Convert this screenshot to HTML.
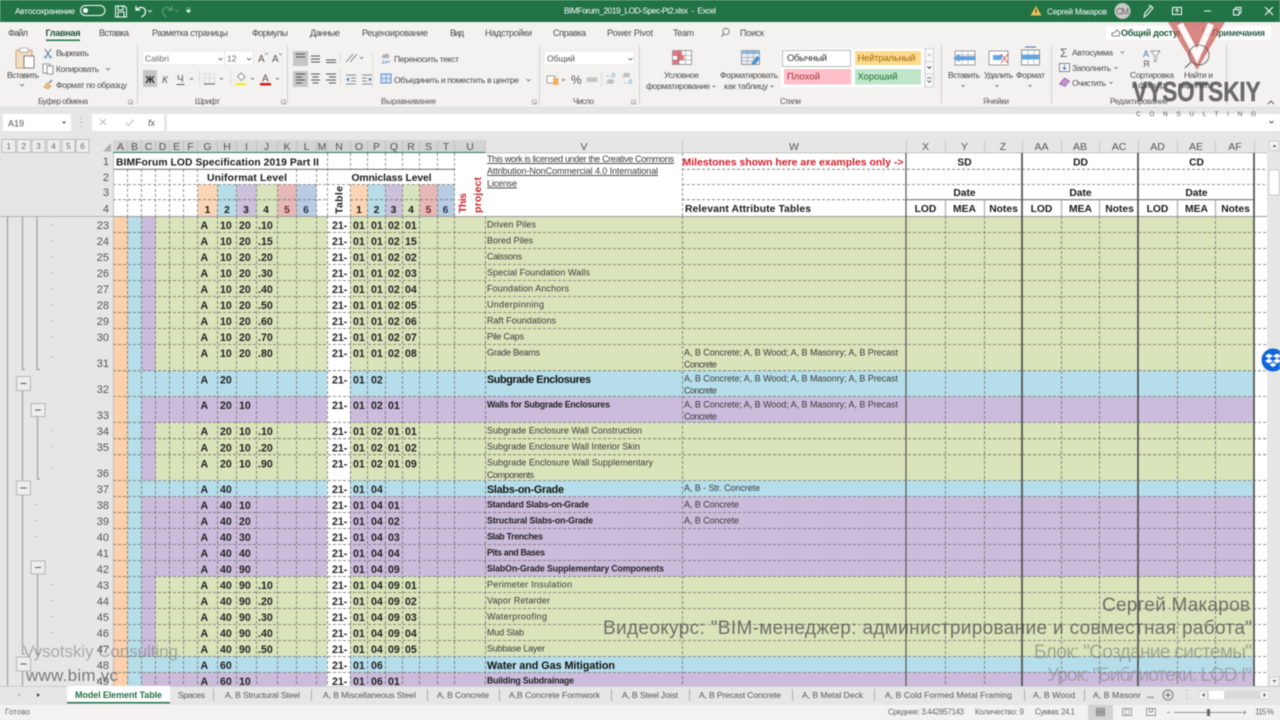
<!DOCTYPE html>
<html lang="ru"><head><meta charset="utf-8"><title>BIMForum_2019_LOD-Spec-Pt2.xlsx - Excel</title>
<style>
html,body{margin:0;padding:0;width:1280px;height:720px;overflow:hidden;background:#e6e6e6}
svg{display:block;position:absolute;left:0;top:0;filter:blur(.4px)}
text{font-family:"Liberation Sans",sans-serif;white-space:pre}
.r{font-size:8.5px;fill:#4a4a4a}
.rb{font-size:9px;fill:#4a4a4a}
.w{font-size:8.300px;fill:#fff}
.l{font-size:8.200px;fill:#555}
.tab{font-size:8.600px;fill:#555}
.d{font-size:10.600px;font-weight:700;fill:#222}
.n{font-size:11px;fill:#555;text-anchor:end}
.c{font-size:10.500px;fill:#555;text-anchor:middle}
.v{font-size:9px;fill:#3a3a3a}
.vb{font-size:8.800px;font-weight:700;fill:#222}
.vB{font-size:10.800px;font-weight:700;fill:#111}
.h{font-size:10.300px;font-weight:700;fill:#1a1a1a}
.hm{font-size:10.300px;font-weight:700;fill:#1a1a1a;text-anchor:middle}
.st{font-size:8px;fill:#666}
</style></head><body>
<svg width="1280" height="720" viewBox="0 0 1280 720" xmlns="http://www.w3.org/2000/svg">
<!-- base -->
<rect width="1280" height="720" fill="#e6e6e6"/>
<rect width="1280" height="22" fill="#217346"/>
<rect y="22" width="1280" height="85" fill="#f3f2f1"/>
<rect y="107" width="1280" height="33" fill="#e6e6e6"/>

<!-- title bar -->
<text class="w" x="15" y="14" textLength="60">Автосохранение</text>
<rect x="80.500" y="5.500" width="24.500" height="10" rx="5" fill="none" stroke="#fff"/>
<circle cx="85.500" cy="10.500" r="2.500" fill="#fff"/>
<path d="M115.500 6h9l2 2v9h-11zM118 6v4h5V6M118 17v-5h6v5" fill="none" stroke="#fff" stroke-width="1"/>
<path d="M136 6v4h4M136.500 10c3-4 9-3 9 1.500 0 2.500-2 4.500-4 5.500" fill="none" stroke="#fff" stroke-width="1.200"/>
<path d="M148 10l2 2 2-2" fill="none" stroke="#fff" stroke-width=".8"/>
<path d="M172 6v4h-4M171.500 10c-3-4-9-3-9 1.500 0 2.500 2 4.500 4 5.500" fill="none" stroke="#5f9a7c" stroke-width="1.200"/>
<path d="M175 10l2 2 2-2" fill="none" stroke="#5f9a7c" stroke-width=".8"/>
<path d="M186.500 8h4M186 10h5l-2.500 3z" fill="#dfe" stroke="#dfe" stroke-width=".5"/>
<text class="w" x="564" y="13.500" textLength="152">BIMForum_2019_LOD-Spec-Pt2.xlsx  -  Excel</text>
<path d="M1036 6l5.500 9.500h-11z" fill="#f0c050"/><rect x="1035.500" y="9" width="1" height="4" fill="#333"/>
<text class="w" x="1047" y="14.500" textLength="60">Сергей Макаров</text>
<circle cx="1122.500" cy="11" r="8" fill="#c9c9c9"/>
<text x="1116" y="14.500" font-size="9" fill="#666" textLength="13">СМ</text>
<path d="M1144 17l1-4 6-7 2 2-6 7zM1149 5l3 2" fill="none" stroke="#fff"/>
<rect x="1172.500" y="7.500" width="9" height="7" fill="none" stroke="#fff"/><path d="M1177 13V9.500M1175 11l2-2 2 2" fill="none" stroke="#fff" stroke-width=".8"/>
<rect x="1204" y="10.500" width="7" height="1" fill="#dfe"/>
<path d="M1233.500 9.500h5.500v5.500h-5.500zM1235.500 9.500v-2h5.500v5.500h-2" fill="none" stroke="#fff" stroke-width=".9"/>
<path d="M1265 7l8 8M1273 7l-8 8" stroke="#fff" stroke-width="1"/>

<!-- tabs row -->
<g class="rb">
<text class="rb" x="8" y="36" textLength="20">Файл</text>
<text class="rb" x="45.500" y="36" font-weight="700" style="fill:#1f4f38" textLength="35">Главная</text>
<text class="rb" x="99" y="36" textLength="30">Вставка</text>
<text class="rb" x="152" y="36" textLength="76">Разметка страницы</text>
<text class="rb" x="252" y="36" textLength="36">Формулы</text>
<text class="rb" x="310" y="36" textLength="30">Данные</text>
<text class="rb" x="362" y="36" textLength="66">Рецензирование</text>
<text class="rb" x="450" y="36" textLength="14">Вид</text>
<text class="rb" x="485" y="36" textLength="47">Надстройки</text>
<text class="rb" x="553" y="36" textLength="33">Справка</text>
<text class="rb" x="607" y="36" textLength="46">Power Pivot</text>
<text class="rb" x="673" y="36" textLength="21">Team</text>
<text class="rb" x="740" y="36" textLength="24">Поиск</text>
</g>
<rect x="46" y="39.500" width="34" height="1.500" fill="#217346"/>
<circle cx="726" cy="31.500" r="3.200" fill="none" stroke="#666" stroke-width=".8"/><path d="M724 34l-2.500 2.500" stroke="#666"/>
<rect x="1106" y="26" width="165" height="14" fill="#fff"/>
<path d="M1112 36v-3h2l3-3 3 3-1 3z" fill="none" stroke="#666" stroke-width=".8"/>
<text x="1121" y="36" font-size="9" font-weight="700" fill="#1f5a3c" textLength="62">Общий доступ</text>
<rect x="1203" y="29" width="7" height="6" fill="none" stroke="#777" stroke-width=".8"/>
<text x="1212" y="36" font-size="9" font-weight="700" fill="#35604a" textLength="53">Примечания</text>

<!-- ribbon separators -->
<path d="M137.500 45v59M287.500 45v59M539.500 45v59M639.500 45v59M941.500 45v59M1051.500 45v59M1226.500 45v59" stroke="#d2d0ce"/>
<path d="M340.500 51v12M372.500 51v37M340.500 70v15M199.500 70v16M230.500 70v16M601.500 72v15" stroke="#dcdcdc"/>

<!-- clipboard -->
<rect x="16" y="50" width="16" height="18" rx="1" fill="#f3dcc0" stroke="#c9a37c"/>
<rect x="20" y="48" width="8" height="4" fill="#fff" stroke="#999" stroke-width=".7"/>
<rect x="24" y="56" width="10" height="12" fill="#fff" stroke="#666" stroke-width=".8"/>
<text class="r" x="7" y="78" textLength="32">Вставить</text><path d="M20 84l2 2 2-2" fill="none" stroke="#666" stroke-width=".8"/>
<path d="M45 49l5 8M51 49l-5 8" stroke="#667" stroke-width=".9" fill="none"/><circle cx="45.500" cy="57" r="1.500" fill="#7aa7d8"/><circle cx="50.500" cy="57" r="1.500" fill="#7aa7d8"/>
<text class="r" x="56" y="56" textLength="33">Вырезать</text>
<rect x="43" y="64" width="7" height="9" fill="#fff" stroke="#777" stroke-width=".8"/><rect x="47" y="66" width="6" height="8" fill="#fff" stroke="#777" stroke-width=".8"/>
<text class="r" x="56" y="72" textLength="43">Копировать</text><path d="M106 68l2 2 2-2" fill="none" stroke="#666" stroke-width=".8"/>
<path d="M44 87l3-4 4 3-3 3z" fill="#f0c070" stroke="#b88a40" stroke-width=".6"/><path d="M49 83l3-3" stroke="#888" stroke-width="1.500"/>
<text class="r" x="56" y="88" textLength="71">Формат по образцу</text>
<text class="l" x="38" y="104" textLength="50">Буфер обмена</text>
<path d="M128.500 100h4v4h-4zM130 102l2 2" fill="none" stroke="#888" stroke-width=".6"/>

<!-- font -->
<rect x="142.500" y="51" width="82" height="14" fill="#fff" stroke="#e0e0e0" stroke-width=".6"/>
<rect x="225" y="51" width="28" height="14" fill="#fff" stroke="#e0e0e0" stroke-width=".6"/>
<text class="r" x="145" y="61.500" textLength="24" style="fill:#666">Calibri</text>
<path d="M218.500 58l2 2 2-2M247 58l2 2 2-2" fill="none" stroke="#555" stroke-width=".8"/>
<text class="r" x="227" y="61.500" style="fill:#666">12</text>
<text x="258" y="62" font-size="10" fill="#555">A</text><text x="272" y="62" font-size="10" fill="#555">A</text>
<path d="M265 54.500l1.500-1.500 1.500 1.500" fill="none" stroke="#3a78c0" stroke-width=".6"/><path d="M279 53.500l1.500 1.500 1.500-1.500" fill="none" stroke="#3a78c0" stroke-width=".6"/>
<rect x="143" y="70" width="14" height="17" fill="#c8c6c4"/>
<text x="145.500" y="83" font-size="10" font-weight="700" fill="#222">Ж</text>
<text x="162" y="83" font-size="10" font-style="italic" fill="#555">К</text>
<text x="177" y="82" font-size="10" fill="#555">Ч</text><rect x="176.500" y="84" width="8" height="1" fill="#555"/>
<path d="M190 78l1.500 1.500 1.500-1.500M220 78l1.500 1.500 1.500-1.500M251 78l1.500 1.500 1.500-1.500M276 78l1.500 1.500 1.500-1.500" fill="none" stroke="#666" stroke-width=".8"/>
<path d="M204.500 73.500h10v10h-10zM204.500 78.500h10M209.500 73.500v10" fill="none" stroke="#bbb" stroke-width=".8" stroke-dasharray="1 1"/><path d="M204 84h11" stroke="#666"/>
<path d="M241 73l4 4-3.500 3.500-4-4z" fill="#fff" stroke="#666" stroke-width=".7"/><rect x="235.500" y="83" width="10.500" height="2.500" fill="#f7e739"/>
<text x="262" y="81.500" font-size="10" fill="#555">А</text><rect x="260" y="83" width="11" height="2.500" fill="#d01c1c"/>
<text class="l" x="195" y="104" textLength="25">Шрифт</text>
<path d="M281.500 100h4v4h-4zM283 102l2 2" fill="none" stroke="#888" stroke-width=".6"/>

<!-- alignment -->
<rect x="293" y="51" width="15" height="15" fill="#c8c6c4"/><rect x="293" y="71" width="15" height="16" fill="#c8c6c4"/>
<path d="M296 54h9M296 57h9M311 56h9M311 59h9M311 62h9M326 60h10M326 62.500h10" stroke="#555" stroke-width=".9" fill="none"/>
<path d="M296 74h9M296 77h6M296 80h9M296 83h6M311 74h9M312.500 77h6M311 80h9M312.500 83h6M326 74h10M329 77h7M326 80h10M329 83h7" stroke="#555" stroke-width=".9" fill="none"/>
<path d="M346 62l7-8M350 62l7-8" stroke="#777" stroke-width=".9"/><path d="M360 57l1.500 1.500 1.500-1.500" fill="none" stroke="#666" stroke-width=".8"/>
<path d="M346 75h10M351 78h5M351 81h5M346 84h10M362 75h10M362 78h5M362 81h5M362 84h10" stroke="#666" stroke-width=".8"/>
<path d="M346 79.500l3-2v4zM372 79.500l-3-2v4z" fill="#3a78c0"/>
<text x="382" y="58" font-size="6.500" fill="#555">ab</text><text x="382" y="64" font-size="6.500" fill="#3a78c0">c↵</text>
<text class="r" x="394" y="62" textLength="65">Переносить текст</text>
<rect x="381" y="74" width="10" height="9" fill="#d3e4f4" stroke="#3a78c0" stroke-width=".8"/><path d="M381 78.500h10M386 74v9" stroke="#3a78c0" stroke-width=".5"/>
<text class="r" x="394" y="83" textLength="125">Объединить и поместить в центре</text>
<path d="M526.500 79l2 2 2-2" fill="none" stroke="#666" stroke-width=".8"/>
<text class="l" x="381" y="104" textLength="55">Выравнивание</text>
<path d="M532.500 100h4v4h-4zM534 102l2 2" fill="none" stroke="#888" stroke-width=".6"/>

<!-- number -->
<rect x="544" y="51" width="90" height="14" fill="#fff" stroke="#e0e0e0" stroke-width=".6"/>
<text class="r" x="547" y="61.500" textLength="28">Общий</text>
<path d="M628.500 58l2 2 2-2M562 79l1.500 1.500 1.500-1.500" fill="none" stroke="#555" stroke-width=".8"/>
<rect x="547" y="76" width="8" height="7" fill="#fff" stroke="#777" stroke-width=".7"/><rect x="553" y="78" width="5.500" height="7" fill="#f4b060"/>
<text x="571" y="84" font-size="12" fill="#555">%</text>
<text x="586.500" y="82" font-size="6.500" fill="#666">000</text>
<text x="605" y="77" font-size="5.500" fill="#3a78c0">←,0</text><text x="606" y="83.500" font-size="5.500" fill="#555">,00</text>
<text x="622" y="77" font-size="5.500" fill="#555">,00</text><text x="622" y="83.500" font-size="5.500" fill="#3a78c0">→,0</text>
<text class="l" x="573" y="104" textLength="21">Число</text>
<path d="M631.500 100h4v4h-4zM633 102l2 2" fill="none" stroke="#888" stroke-width=".6"/>

<!-- styles -->
<rect x="672.500" y="50.500" width="19" height="14" fill="#fff" stroke="#777" stroke-width=".7"/>
<rect x="673" y="51" width="9" height="4.500" fill="#e8727c"/><rect x="677" y="55.500" width="7" height="4.500" fill="#e8727c"/><rect x="673" y="60" width="6" height="4" fill="#e8727c"/>
<path d="M672.500 55.500h19M672.500 60h19M679 50.500v14M685.500 50.500v14" stroke="#777" stroke-width=".5"/>
<text class="r" x="664" y="78" textLength="35">Условное</text>
<text class="r" x="646" y="89" textLength="64">форматирование</text><path d="M712.500 85.500l1.500 1.500 1.500-1.500" fill="none" stroke="#666" stroke-width=".8"/>
<rect x="741.500" y="50.500" width="18" height="14" fill="#eaf1f8" stroke="#777" stroke-width=".7"/>
<rect x="741.500" y="50.500" width="18" height="3.500" fill="#8fb6dc"/>
<path d="M741.500 57.500h18M741.500 61h18M747.500 50.500v14M753.500 50.500v14" stroke="#888" stroke-width=".5"/>
<path d="M751 64l6-8 3 2-5 7z" fill="#4a90d0"/>
<text class="r" x="720" y="78" textLength="58">Форматировать</text>
<text class="r" x="724" y="89" textLength="44">как таблицу</text><path d="M770.500 85.500l1.500 1.500 1.500-1.500" fill="none" stroke="#666" stroke-width=".8"/>
<rect x="781" y="49" width="143" height="38" fill="#fff"/>
<rect x="782.500" y="50.500" width="68" height="16" fill="#fff" stroke="#bdbdbd"/>
<rect x="784" y="69" width="67" height="15.500" fill="#ffc0ca"/>
<rect x="855" y="51" width="66" height="14" fill="#fddb8e"/>
<rect x="855" y="69" width="66" height="15.500" fill="#bfe6c8"/>
<text x="787" y="61" font-size="9.500" fill="#333" textLength="40">Обычный</text>
<text x="787" y="79.500" font-size="9.500" fill="#a0303a" textLength="33">Плохой</text>
<text x="857.500" y="61" font-size="9.500" fill="#9c6a10" textLength="58">Нейтральный</text>
<text x="857.500" y="79.500" font-size="9.500" fill="#1c6e34" textLength="40">Хороший</text>
<rect x="925" y="48.500" width="8.500" height="38.500" fill="#f8f8f8" stroke="#c4c4c4" stroke-width=".7"/>
<path d="M925 61.500h8.500M925 74h8.500" stroke="#c4c4c4" stroke-width=".7"/>
<path d="M927.500 56l1.800-1.800 1.800 1.800" fill="none" stroke="#bbb"/>
<path d="M927.500 66.500l1.800 1.800 1.800-1.800" fill="none" stroke="#444"/>
<path d="M927 78h4.500M927.500 80.500l1.800 1.800 1.800-1.800" fill="none" stroke="#444" stroke-width=".8"/>
<text class="l" x="780" y="104" textLength="21">Стили</text>

<!-- cells -->
<rect x="955" y="51" width="20" height="14" fill="#fff" stroke="#777" stroke-width=".7"/><path d="M955 55h20M955 60h20M962 51v14M968 51v14" stroke="#999" stroke-width=".5"/>
<path d="M954 58l5-3.500v2h16v3h-16v2z" fill="#62a8e4" stroke="#3a78c0" stroke-width=".5"/>
<rect x="989" y="51" width="19" height="14" fill="#fff" stroke="#777" stroke-width=".7"/><rect x="993" y="55" width="9" height="5" fill="#62a8e4"/>
<path d="M1001 54l7 9M1008 54l-7 9" stroke="#d8504a" stroke-width="1"/>
<rect x="1021.500" y="50" width="18" height="15" fill="#fff" stroke="#666" stroke-width=".7"/><rect x="1022" y="54.500" width="17" height="5" fill="#62a8e4"/><path d="M1028 50v15M1034 50v15" stroke="#888" stroke-width=".5"/><path d="M1025 47h11" stroke="#3a78c0"/>
<text class="r" x="948" y="78" textLength="32">Вставить</text>
<text class="r" x="984" y="78" textLength="29">Удалить</text>
<text class="r" x="1016" y="78" textLength="29">Формат</text>
<path d="M961.500 85l1.500 1.500 1.500-1.500M995.500 85l1.500 1.500 1.500-1.500M1028.500 85l1.500 1.500 1.500-1.500" fill="none" stroke="#666" stroke-width=".8"/>
<text class="l" x="983" y="104" textLength="26">Ячейки</text>

<!-- editing -->
<text x="1060" y="57" font-size="12" fill="#666">Σ</text>
<text class="r" x="1072" y="55.500" textLength="41">Автосумма</text>
<path d="M1121 51.500l1.500 1.500 1.500-1.500" fill="none" stroke="#666" stroke-width=".8"/>
<rect x="1059.500" y="63.500" width="10" height="8" fill="#fff" stroke="#666" stroke-width=".8"/><path d="M1064.500 64.500v5M1062.500 67.500l2 2 2-2" fill="none" stroke="#3a78c0" stroke-width=".9"/>
<text class="r" x="1072" y="71" textLength="39">Заполнить</text>
<path d="M1114.500 67l1.500 1.500 1.500-1.500" fill="none" stroke="#666" stroke-width=".8"/>
<path d="M1059.500 84l5-6 5 3-4.500 5.500z" fill="#c890d0" stroke="#8a5a9a" stroke-width=".7"/>
<text class="r" x="1072" y="86" textLength="34">Очистить</text>
<path d="M1109.500 82l1.500 1.500 1.500-1.500" fill="none" stroke="#666" stroke-width=".8"/>
<text x="1143" y="57" font-size="9" fill="#3a78c0">А</text><text x="1143" y="67" font-size="9" fill="#555">Я</text>
<path d="M1151 51h9l-3.500 4.500v5l-2 1.500v-6.500z" fill="#fff" stroke="#777" stroke-width=".7"/>
<text class="r" x="1130" y="78" textLength="44">Сортировка</text>
<text class="r" x="1132" y="88" textLength="33">и фильтр</text>
<text class="r" x="1184" y="78" textLength="29">Найти и</text>
<text class="r" x="1178" y="88" textLength="34">выделить</text>
<text class="l" x="1110" y="104" textLength="58">Редактирование</text>
<path d="M1268 104l3-3 3 3" fill="none" stroke="#555" stroke-width=".9"/>

<!-- formula bar -->
<rect y="107" width="1280" height="1" fill="#dcdcdc"/>
<rect x="3" y="114" width="68" height="17" fill="#fff"/>
<text x="8" y="126.500" font-size="9" fill="#555">A19</text>
<path d="M62 121.500h4l-2 2.500z" fill="#666"/>
<path d="M81 118v1M81 122v1M81 126v1" stroke="#999"/>
<rect x="92" y="114" width="72" height="17" fill="#fff"/>
<path d="M100 119l6 6M106 119l-6 6M126 122.500l2.500 3 5-6" fill="none" stroke="#bbb" stroke-width="1"/>
<text x="148" y="126" font-size="9" font-style="italic" fill="#555" font-family="Liberation Serif">fx</text>
<rect x="167" y="114" width="1100" height="17" fill="#fff"/>
<rect x="1267" y="114" width="13" height="17" fill="#fff"/>
<path d="M1269.500 121l2 2 2-2" fill="none" stroke="#555"/>

<!-- outline buttons -->
<g fill="#ededed" stroke="#b4b4b4" stroke-width=".8">
<rect x="2" y="139.500" width="13.500" height="13"/><rect x="17" y="139.500" width="13.500" height="13"/><rect x="32" y="139.500" width="13" height="13"/><rect x="47" y="139.500" width="13" height="13"/><rect x="62" y="139.500" width="13" height="13"/><rect x="76" y="139.500" width="13" height="13"/>
</g>
<g font-size="8" fill="#666" text-anchor="middle"><text x="8.700" y="149">1</text><text x="23.700" y="149">2</text><text x="38.500" y="149">3</text><text x="53.500" y="149">4</text><text x="68.500" y="149">5</text><text x="82.500" y="149">6</text></g>

<!-- column header -->
<rect x="113" y="140" width="372" height="13" fill="#d4d4d4"/>
<path d="M111 151.500L103 151.500 111 143z" fill="#b0b0b0"/>
<g stroke="#b8b8b8" stroke-width=".7"><path d="M127.500 141v12M141.500 141v12M155.500 141v12M169.500 141v12M183.500 141v12M197.500 141v12M217.500 141v12M236.500 141v12M256.500 141v12M277.500 141v12M296.500 141v12M316.500 141v12M327.500 141v12M350.500 141v12M367.500 141v12M385.500 141v12M402.500 141v12M419.500 141v12M437.500 141v12M454.500 141v12M485.500 141v12M682.500 141v12M906.500 141v12M945.500 141v12M984.500 141v12M1022.500 141v12M1061.500 141v12M1099.500 141v12M1138.500 141v12M1177.500 141v12M1215.500 141v12M1254.500 141v12"/></g>
<g class="c">
<text class="c" x="120.500" y="150">A</text><text class="c" x="134.500" y="150">B</text><text class="c" x="148.500" y="150">C</text><text class="c" x="162.500" y="150">D</text><text class="c" x="176.500" y="150">E</text><text class="c" x="190.500" y="150">F</text><text class="c" x="207.500" y="150">G</text><text class="c" x="227" y="150">H</text><text class="c" x="246.500" y="150">I</text><text class="c" x="266.500" y="150">J</text><text class="c" x="287" y="150">K</text><text class="c" x="306.500" y="150">L</text><text class="c" x="322" y="150">M</text><text class="c" x="339" y="150">N</text><text class="c" x="359" y="150">O</text><text class="c" x="376.500" y="150">P</text><text class="c" x="394" y="150">Q</text><text class="c" x="411" y="150">R</text><text class="c" x="428.500" y="150">S</text><text class="c" x="446" y="150">T</text><text class="c" x="470" y="150">U</text><text class="c" x="584" y="150">V</text><text class="c" x="794" y="150">W</text><text class="c" x="925.500" y="150">X</text><text class="c" x="964.500" y="150">Y</text><text class="c" x="1003" y="150">Z</text><text class="c" x="1041.500" y="150">AA</text><text class="c" x="1080" y="150">AB</text><text class="c" x="1119" y="150">AC</text><text class="c" x="1157.500" y="150">AD</text><text class="c" x="1196" y="150">AE</text><text class="c" x="1235" y="150">AF</text>
</g>

<!-- sheet backgrounds -->
<rect x="113" y="153" width="1154" height="64" fill="#fff"/>
<rect x="1254" y="216" width="13" height="470" fill="#fff"/>
<rect x="113" y="216.500" width="14.500" height="470" fill="#fbd0aa"/>
<rect x="127.500" y="216.500" width="14" height="470" fill="#b6deea"/>
<rect x="141.500" y="216.500" width="14" height="470" fill="#cbbcdc"/>
<rect x="155.500" y="216.500" width="1098.500" height="470" fill="#d9e4ba"/>
<g fill="#b6deea"><rect x="141.500" y="370.700" width="1112.500" height="25.700"/><rect x="141.500" y="480.500" width="1112.500" height="16"/><rect x="141.500" y="656.500" width="1112.500" height="16"/></g>
<g fill="#cbbcdc"><rect x="155.500" y="396.400" width="1098.500" height="26"/><rect x="155.500" y="496.500" width="1098.500" height="80"/><rect x="155.500" y="672.500" width="1098.500" height="14"/></g>
<rect x="327" y="216.500" width="23" height="470" fill="#fff"/>
<!-- header colours -->
<g>
<rect x="197.500" y="184.500" width="20" height="32" fill="#fcd5b4"/><rect x="217.500" y="184.500" width="19" height="32" fill="#b7dee8"/><rect x="236.500" y="184.500" width="20" height="32" fill="#ccc0da"/><rect x="256.500" y="184.500" width="21" height="32" fill="#d8e4bc"/><rect x="277.500" y="184.500" width="19" height="32" fill="#e6b8b7"/><rect x="296.500" y="184.500" width="20" height="32" fill="#b8cce4"/>
<rect x="350.500" y="184.500" width="17" height="32" fill="#fcd5b4"/><rect x="367.500" y="184.500" width="18" height="32" fill="#b7dee8"/><rect x="385.500" y="184.500" width="17" height="32" fill="#ccc0da"/><rect x="402.500" y="184.500" width="17" height="32" fill="#d8e4bc"/><rect x="419.500" y="184.500" width="18" height="32" fill="#e6b8b7"/><rect x="437.500" y="184.500" width="17" height="32" fill="#b8cce4"/>
</g>
<!-- dashed grid data -->
<path fill="none" stroke="#6c6c6c" stroke-width=".8" stroke-dasharray="3 2" d="M127.500 216V686M141.500 216V686M155.500 216V686M169.500 216V686M183.500 216V686M197.500 216V686M217.500 216V686M236.500 216V686M256.500 216V686M277.500 216V686M296.500 216V686M316.500 216V686M327.500 216V686M350.500 216V686M367.500 216V686M385.500 216V686M402.500 216V686M419.500 216V686M437.500 216V686M454.500 216V686M485.500 216V686M682.500 216V686M945.500 216V686M984.500 216V686M1061.500 216V686M1099.500 216V686M1177.500 216V686M1215.500 216V686
M113 232.500H1267M113 248.500H1267M113 264.500H1267M113 280.500H1267M113 296.500H1267M113 312.500H1267M113 328.500H1267M113 344.500H1267M113 370.700H1267M113 396.400H1267M113 422.400H1267M113 438.700H1267M113 454.700H1267M113 480.500H1267M113 496.500H1267M113 512.500H1267M113 528.500H1267M113 544.500H1267M113 560.500H1267M113 576.500H1267M113 592.500H1267M113 608.500H1267M113 624.500H1267M113 640.500H1267M113 656.500H1267M113 672.500H1267"/>
<!-- dashed grid header -->
<path fill="none" stroke="#777" stroke-width=".8" stroke-dasharray="3 2" d="M127.500 169V216M141.500 169V216M155.500 169V216M169.500 169V216M183.500 169V216M197.500 169V216M217.500 184V216M236.500 184V216M256.500 184V216M277.500 184V216M296.500 169V216M316.500 169V216M327.500 153V216M350.500 153V170M350.500 184V216M367.500 153V170M367.500 184V216M385.500 153V170M385.500 184V216M402.500 153V170M402.500 184V216M419.500 153V170M419.500 184V216M437.500 153V170M437.500 184V216M454.500 153V216M682.500 153V216
M113 184.500H327M113 199.700H327M327 184.500H455M350 199.700H455M682 169.300H1267M682 184.500H1267M682 199.700H906"/>
<path fill="none" stroke="#555" stroke-width=".8" d="M113 169.300H455M906 199.700H1254"/>
<path d="M945.500 200V216M984.500 200V216M1061.500 200V216M1099.500 200V216M1177.500 200V216M1215.500 200V216" stroke="#bbb" stroke-width="1.500"/>
<path d="M113 216.500H1267" stroke="#9a9a9a" stroke-width="1"/>
<rect x="113" y="152" width="372" height="1" fill="#2a7a50"/>
<rect x="485" y="152.500" width="782" height=".7" fill="#b0b0b0"/>
<!-- strong verticals -->
<path d="M906 153V686" stroke="#555" stroke-width="1.200"/>
<path d="M1022 153V686M1138 153V686M1254 153V686" stroke="#505050" stroke-width="1.700"/>

<!-- gutter outline -->
<rect y="216" width="113" height=".8" fill="#a6a6a6"/>
<rect x="113" y="153" width=".8" height="533" fill="#b5b5b5"/>
<g fill="none" stroke="#a8a8a8" stroke-width="1.400">
<path d="M7.500 216V686"/>
<path d="M22.500 216V369.500H25M22.500 391V480M22.500 495V654H25M22.500 671V686"/>
<path d="M37 216V369.500H40M37.500 416V479H40M37.500 574V654H40"/>
</g>
<g fill="#ededed" stroke="#a8a8a8" stroke-width=".8">
<rect x="16.500" y="376.500" width="14" height="14"/><rect x="31" y="403.500" width="14" height="13"/><rect x="16.500" y="481" width="14" height="14"/><rect x="31" y="561" width="14" height="13"/><rect x="16.500" y="657" width="14" height="14"/>
</g>
<path d="M20.500 383.500h6M35 410h6M20.500 488h6M35 567.500h6M20.500 664h6" stroke="#555"/>
<g fill="#888"><rect x="51" y="224.500" width="1" height="1"/><rect x="51" y="240.500" width="1" height="1"/><rect x="51" y="256.500" width="1" height="1"/><rect x="51" y="272.500" width="1" height="1"/><rect x="51" y="288.500" width="1" height="1"/><rect x="51" y="304.500" width="1" height="1"/><rect x="51" y="320.500" width="1" height="1"/><rect x="51" y="336.500" width="1" height="1"/><rect x="51" y="356.500" width="1" height="1"/><rect x="51" y="430" width="1" height="1"/><rect x="51" y="446" width="1" height="1"/><rect x="51" y="467" width="1" height="1"/><rect x="36" y="504" width="1" height="1"/><rect x="36" y="520" width="1" height="1"/><rect x="36" y="536" width="1" height="1"/><rect x="51" y="584" width="1" height="1"/><rect x="51" y="600" width="1" height="1"/><rect x="51" y="616" width="1" height="1"/><rect x="51" y="632" width="1" height="1"/></g>

<!-- row numbers -->
<g>
<text class="n" x="109" y="165">1</text><text class="n" x="109" y="181">2</text><text class="n" x="109" y="196">3</text><text class="n" x="109" y="212.500">4</text>
<text class="n" x="109" y="229">23</text><text class="n" x="109" y="245">24</text><text class="n" x="109" y="261">25</text><text class="n" x="109" y="277">26</text><text class="n" x="109" y="293">27</text><text class="n" x="109" y="309">28</text><text class="n" x="109" y="325">29</text><text class="n" x="109" y="341">30</text><text class="n" x="109" y="367">31</text><text class="n" x="109" y="393">32</text><text class="n" x="109" y="419">33</text><text class="n" x="109" y="435">34</text><text class="n" x="109" y="451">35</text><text class="n" x="109" y="477">36</text><text class="n" x="109" y="493">37</text><text class="n" x="109" y="509">38</text><text class="n" x="109" y="525">39</text><text class="n" x="109" y="541">40</text><text class="n" x="109" y="557">41</text><text class="n" x="109" y="573">42</text><text class="n" x="109" y="589">43</text><text class="n" x="109" y="605">44</text><text class="n" x="109" y="621">45</text><text class="n" x="109" y="637">46</text><text class="n" x="109" y="653">47</text><text class="n" x="109" y="669">48</text><text class="n" x="109" y="685">49</text>
</g>

<!-- header text -->
<text class="h" x="116" y="165.500" textLength="203">BIMForum LOD Specification 2019 Part II</text>
<text class="h" x="207" y="181" textLength="80">Uniformat Level</text>
<text class="h" x="351.500" y="181" textLength="80">Omniclass Level</text>
<g class="hm">
<text class="hm" x="207.500" y="213">1</text><text class="hm" x="227" y="213">2</text><text class="hm" x="246" y="213">3</text><text class="hm" x="266" y="213">4</text><text class="hm" x="287" y="213" style="fill:#6e2a2a">5</text><text class="hm" x="306" y="213" style="fill:#24364f">6</text>
<text class="hm" x="359" y="213">1</text><text class="hm" x="376.500" y="213">2</text><text class="hm" x="393.500" y="213">3</text><text class="hm" x="411" y="213">4</text><text class="hm" x="428.500" y="213" style="fill:#6e2a2a">5</text><text class="hm" x="445.500" y="213" style="fill:#24364f">6</text>
</g>
<text class="h" transform="translate(342.500 214) rotate(-90)" textLength="28">Table</text>
<text x="0" y="0" font-size="10.500" font-weight="700" fill="#c8242c" transform="translate(466 213) rotate(-90)" textLength="20">This</text>
<text x="0" y="0" font-size="10.500" font-weight="700" fill="#c8242c" transform="translate(481 213) rotate(-90)" textLength="36">project</text>
<g class="v">
<text class="v" x="487" y="162" text-decoration="underline" textLength="187">This work is licensed under the Creative Commons</text>
<text class="v" x="487" y="174" text-decoration="underline" textLength="171">Attribution-NonCommercial 4.0 International</text>
<text class="v" x="487" y="186.500" text-decoration="underline" textLength="30">License</text>
</g>
<text x="682.500" y="165.500" font-size="10.500" font-weight="700" fill="#d0202a" textLength="221">Milestones shown here are examples only -&gt;</text>
<text class="h" x="685" y="212" textLength="126">Relevant Attribute Tables</text>
<g>
<text class="hm" x="964.500" y="165.500">SD</text><text class="hm" x="1080.500" y="165.500">DD</text><text class="hm" x="1196.500" y="165.500">CD</text>
<text class="hm" x="964.500" y="196">Date</text><text class="hm" x="1080.500" y="196">Date</text><text class="hm" x="1196.500" y="196">Date</text>
<text class="hm" x="925.500" y="212">LOD</text><text class="hm" x="964.500" y="212">MEA</text><text class="hm" x="1003.500" y="212">Notes</text>
<text class="hm" x="1041.500" y="212">LOD</text><text class="hm" x="1080.500" y="212">MEA</text><text class="hm" x="1119.500" y="212">Notes</text>
<text class="hm" x="1157.500" y="212">LOD</text><text class="hm" x="1196.500" y="212">MEA</text><text class="hm" x="1235.500" y="212">Notes</text>
</g>

<!-- data -->
<text class="d" y="229.200"><tspan x="200.500">A</tspan><tspan x="220">10</tspan><tspan x="239">20</tspan><tspan x="258">.10</tspan><tspan x="332">21-</tspan><tspan x="353">01</tspan><tspan x="371">01</tspan><tspan x="388">02</tspan><tspan x="405">01</tspan></text>
<text class="d" y="245.200"><tspan x="200.500">A</tspan><tspan x="220">10</tspan><tspan x="239">20</tspan><tspan x="258">.15</tspan><tspan x="332">21-</tspan><tspan x="353">01</tspan><tspan x="371">01</tspan><tspan x="388">02</tspan><tspan x="405">15</tspan></text>
<text class="d" y="261.200"><tspan x="200.500">A</tspan><tspan x="220">10</tspan><tspan x="239">20</tspan><tspan x="258">.20</tspan><tspan x="332">21-</tspan><tspan x="353">01</tspan><tspan x="371">01</tspan><tspan x="388">02</tspan><tspan x="405">02</tspan></text>
<text class="d" y="277.200"><tspan x="200.500">A</tspan><tspan x="220">10</tspan><tspan x="239">20</tspan><tspan x="258">.30</tspan><tspan x="332">21-</tspan><tspan x="353">01</tspan><tspan x="371">01</tspan><tspan x="388">02</tspan><tspan x="405">03</tspan></text>
<text class="d" y="293.200"><tspan x="200.500">A</tspan><tspan x="220">10</tspan><tspan x="239">20</tspan><tspan x="258">.40</tspan><tspan x="332">21-</tspan><tspan x="353">01</tspan><tspan x="371">01</tspan><tspan x="388">02</tspan><tspan x="405">04</tspan></text>
<text class="d" y="309.200"><tspan x="200.500">A</tspan><tspan x="220">10</tspan><tspan x="239">20</tspan><tspan x="258">.50</tspan><tspan x="332">21-</tspan><tspan x="353">01</tspan><tspan x="371">01</tspan><tspan x="388">02</tspan><tspan x="405">05</tspan></text>
<text class="d" y="325.200"><tspan x="200.500">A</tspan><tspan x="220">10</tspan><tspan x="239">20</tspan><tspan x="258">.60</tspan><tspan x="332">21-</tspan><tspan x="353">01</tspan><tspan x="371">01</tspan><tspan x="388">02</tspan><tspan x="405">06</tspan></text>
<text class="d" y="341.200"><tspan x="200.500">A</tspan><tspan x="220">10</tspan><tspan x="239">20</tspan><tspan x="258">.70</tspan><tspan x="332">21-</tspan><tspan x="353">01</tspan><tspan x="371">01</tspan><tspan x="388">02</tspan><tspan x="405">07</tspan></text>
<text class="d" y="357.200"><tspan x="200.500">A</tspan><tspan x="220">10</tspan><tspan x="239">20</tspan><tspan x="258">.80</tspan><tspan x="332">21-</tspan><tspan x="353">01</tspan><tspan x="371">01</tspan><tspan x="388">02</tspan><tspan x="405">08</tspan></text>
<text class="d" y="383.400"><tspan x="200.500">A</tspan><tspan x="220">20</tspan><tspan x="332">21-</tspan><tspan x="353">01</tspan><tspan x="371">02</tspan></text>
<text class="d" y="409"><tspan x="200.500">A</tspan><tspan x="220">20</tspan><tspan x="239">10</tspan><tspan x="332">21-</tspan><tspan x="353">01</tspan><tspan x="371">02</tspan><tspan x="388">01</tspan></text>
<text class="d" y="435"><tspan x="200.500">A</tspan><tspan x="220">20</tspan><tspan x="239">10</tspan><tspan x="258">.10</tspan><tspan x="332">21-</tspan><tspan x="353">01</tspan><tspan x="371">02</tspan><tspan x="388">01</tspan><tspan x="405">01</tspan></text>
<text class="d" y="451.300"><tspan x="200.500">A</tspan><tspan x="220">20</tspan><tspan x="239">10</tspan><tspan x="258">.20</tspan><tspan x="332">21-</tspan><tspan x="353">01</tspan><tspan x="371">02</tspan><tspan x="388">01</tspan><tspan x="405">02</tspan></text>
<text class="d" y="467.300"><tspan x="200.500">A</tspan><tspan x="220">20</tspan><tspan x="239">10</tspan><tspan x="258">.90</tspan><tspan x="332">21-</tspan><tspan x="353">01</tspan><tspan x="371">02</tspan><tspan x="388">01</tspan><tspan x="405">09</tspan></text>
<text class="d" y="493.200"><tspan x="200.500">A</tspan><tspan x="220">40</tspan><tspan x="332">21-</tspan><tspan x="353">01</tspan><tspan x="371">04</tspan></text>
<text class="d" y="509.200"><tspan x="200.500">A</tspan><tspan x="220">40</tspan><tspan x="239">10</tspan><tspan x="332">21-</tspan><tspan x="353">01</tspan><tspan x="371">04</tspan><tspan x="388">01</tspan></text>
<text class="d" y="525.200"><tspan x="200.500">A</tspan><tspan x="220">40</tspan><tspan x="239">20</tspan><tspan x="332">21-</tspan><tspan x="353">01</tspan><tspan x="371">04</tspan><tspan x="388">02</tspan></text>
<text class="d" y="541.200"><tspan x="200.500">A</tspan><tspan x="220">40</tspan><tspan x="239">30</tspan><tspan x="332">21-</tspan><tspan x="353">01</tspan><tspan x="371">04</tspan><tspan x="388">03</tspan></text>
<text class="d" y="557.200"><tspan x="200.500">A</tspan><tspan x="220">40</tspan><tspan x="239">40</tspan><tspan x="332">21-</tspan><tspan x="353">01</tspan><tspan x="371">04</tspan><tspan x="388">04</tspan></text>
<text class="d" y="573.200"><tspan x="200.500">A</tspan><tspan x="220">40</tspan><tspan x="239">90</tspan><tspan x="332">21-</tspan><tspan x="353">01</tspan><tspan x="371">04</tspan><tspan x="388">09</tspan></text>
<text class="d" y="589.200"><tspan x="200.500">A</tspan><tspan x="220">40</tspan><tspan x="239">90</tspan><tspan x="258">.10</tspan><tspan x="332">21-</tspan><tspan x="353">01</tspan><tspan x="371">04</tspan><tspan x="388">09</tspan><tspan x="405">01</tspan></text>
<text class="d" y="605.200"><tspan x="200.500">A</tspan><tspan x="220">40</tspan><tspan x="239">90</tspan><tspan x="258">.20</tspan><tspan x="332">21-</tspan><tspan x="353">01</tspan><tspan x="371">04</tspan><tspan x="388">09</tspan><tspan x="405">02</tspan></text>
<text class="d" y="621.200"><tspan x="200.500">A</tspan><tspan x="220">40</tspan><tspan x="239">90</tspan><tspan x="258">.30</tspan><tspan x="332">21-</tspan><tspan x="353">01</tspan><tspan x="371">04</tspan><tspan x="388">09</tspan><tspan x="405">03</tspan></text>
<text class="d" y="637.200"><tspan x="200.500">A</tspan><tspan x="220">40</tspan><tspan x="239">90</tspan><tspan x="258">.40</tspan><tspan x="332">21-</tspan><tspan x="353">01</tspan><tspan x="371">04</tspan><tspan x="388">09</tspan><tspan x="405">04</tspan></text>
<text class="d" y="653.200"><tspan x="200.500">A</tspan><tspan x="220">40</tspan><tspan x="239">90</tspan><tspan x="258">.50</tspan><tspan x="332">21-</tspan><tspan x="353">01</tspan><tspan x="371">04</tspan><tspan x="388">09</tspan><tspan x="405">05</tspan></text>
<text class="d" y="669.200"><tspan x="200.500">A</tspan><tspan x="220">60</tspan><tspan x="332">21-</tspan><tspan x="353">01</tspan><tspan x="371">06</tspan></text>
<text class="d" y="685.200"><tspan x="200.500">A</tspan><tspan x="220">60</tspan><tspan x="239">10</tspan><tspan x="332">21-</tspan><tspan x="353">01</tspan><tspan x="371">06</tspan><tspan x="388">01</tspan></text>

<!-- V column -->
<text class="v" x="487" y="227.500" textLength="49">Driven Piles</text>
<text class="v" x="487" y="243.500" textLength="46">Bored Piles</text>
<text class="v" x="487" y="259.500" textLength="35">Caissons</text>
<text class="v" x="487" y="275.500" textLength="103">Special Foundation Walls</text>
<text class="v" x="487" y="291.500" textLength="82">Foundation Anchors</text>
<text class="v" x="487" y="307.500" textLength="57">Underpinning</text>
<text class="v" x="487" y="323.500" textLength="69">Raft Foundations</text>
<text class="v" x="487" y="339.500" textLength="37">Pile Caps</text>
<text class="v" x="487" y="355.500" textLength="53">Grade Beams</text>
<text class="vB" x="487" y="383" textLength="104">Subgrade Enclosures</text>
<text class="vb" x="487" y="407.500" textLength="123">Walls for Subgrade Enclosures</text>
<text class="v" x="487" y="433.500" textLength="155">Subgrade Enclosure Wall Construction</text>
<text class="v" x="487" y="449.500" textLength="153">Subgrade Enclosure Wall Interior Skin</text>
<text class="v" x="487" y="465.500" textLength="166">Subgrade Enclosure Wall Supplementary</text>
<text class="v" x="487" y="478" textLength="47">Components</text>
<text class="vB" x="487" y="493" textLength="77">Slabs-on-Grade</text>
<text class="vb" x="487" y="507.500" textLength="102">Standard Slabs-on-Grade</text>
<text class="vb" x="487" y="523.500" textLength="106">Structural Slabs-on-Grade</text>
<text class="vb" x="487" y="539.500" textLength="56">Slab Trenches</text>
<text class="vb" x="487" y="555.500" textLength="58">Pits and Bases</text>
<text class="vb" x="487" y="571.500" textLength="177">SlabOn-Grade Supplementary Components</text>
<text class="v" x="487" y="587.500" textLength="85">Perimeter Insulation</text>
<text class="v" x="487" y="603.500" textLength="63">Vapor Retarder</text>
<text class="v" x="487" y="619.500" textLength="60">Waterproofing</text>
<text class="v" x="487" y="635.500" textLength="37">Mud Slab</text>
<text class="v" x="487" y="651.500" textLength="58">Subbase Layer</text>
<text class="vB" x="487" y="669" textLength="128">Water and Gas Mitigation</text>
<text class="vb" x="487" y="683.500" textLength="87">Building Subdrainage</text>
<!-- W column -->
<text class="v" x="684" y="355.500" textLength="214">A, B Concrete; A, B Wood; A, B Masonry; A, B Precast</text>
<text class="v" x="684" y="367.500" textLength="33">Concrete</text>
<text class="v" x="684" y="381.500" textLength="214">A, B Concrete; A, B Wood; A, B Masonry; A, B Precast</text>
<text class="v" x="684" y="393.500" textLength="33">Concrete</text>
<text class="v" x="684" y="407.500" textLength="214">A, B Concrete; A, B Wood; A, B Masonry; A, B Precast</text>
<text class="v" x="684" y="419.500" textLength="33">Concrete</text>
<text class="v" x="684" y="491" textLength="76">A, B - Str. Concrete</text>
<text class="v" x="684" y="507.500" textLength="55">A, B Concrete</text>
<text class="v" x="684" y="523.500" textLength="55">A, B Concrete</text>

<!-- right scrollbar -->
<rect x="1267" y="140" width="13" height="546" fill="#e6e6e6"/>
<rect x="1269.500" y="141" width="9.500" height="9.500" fill="#f4f4f4" stroke="#bbb" stroke-width=".6"/>
<path d="M1272.500 147l2-2.500 2 2.500z" fill="#666"/>
<rect x="1269" y="170" width="10" height="25" fill="#fff" stroke="#bbb" stroke-width=".6"/>
<rect x="1269.500" y="677" width="9.500" height="9" fill="#f4f4f4" stroke="#bbb" stroke-width=".6"/>
<path d="M1272.500 680l2 2.500 2-2.500z" fill="#666"/>
<!-- dropbox -->
<circle cx="1273" cy="360" r="11.500" fill="#0f65d8"/>
<path d="M1269 353.500l4 2.500-4 2.500-4-2.500zM1277 353.500l4 2.500-4 2.500-4-2.500zM1269 358.500l4 2.500-4 2.500-4-2.500zM1277 358.500l4 2.500-4 2.500-4-2.500zM1273 362.500l3.500 2.300-3.500 2.300-3.500-2.300z" fill="#fff"/>

<!-- tab bar -->
<rect y="686" width="1280" height="19" fill="#e6e6e6"/>
<rect y="686" width="1280" height=".7" fill="#c0c0c0"/>
<path d="M17 695l3-2v4z" fill="#bbb"/><path d="M40 695l-3-2v4z" fill="#444"/>
<rect x="67" y="686" width="103" height="16.500" fill="#fff"/><rect x="67" y="702" width="103" height="1.500" fill="#217346"/>
<text x="75" y="698" font-size="9" font-weight="700" fill="#217346" textLength="87">Model Element Table</text>
<text class="tab" x="178" y="698" textLength="27">Spaces</text>
<text class="tab" x="225" y="698" textLength="75">A, B Structural Steel</text>
<text class="tab" x="323" y="698" textLength="93">A, B Miscellaneous Steel</text>
<text class="tab" x="437" y="698" textLength="52">A, B Concrete</text>
<text class="tab" x="509" y="698" textLength="91">A,B Concrete Formwork</text>
<text class="tab" x="622" y="698" textLength="56">A, B Steel Joist</text>
<text class="tab" x="699" y="698" textLength="82">A, B Precast Concrete</text>
<text class="tab" x="802" y="698" textLength="61">A, B Metal Deck</text>
<text class="tab" x="885" y="698" textLength="127">A, B Cold Formed Metal Framing</text>
<text class="tab" x="1033" y="698" textLength="42">A, B Wood</text>
<text class="tab" x="1093" y="698" textLength="48">A, B Masonr</text>
<text class="tab" x="1147" y="698" font-weight="700" style="fill:#444">...</text>
<path d="M213.500 689v12M311.500 689v12M427.500 689v12M499.500 689v12M611.500 689v12M689.500 689v12M792.500 689v12M874.500 689v12M1024.500 689v12M1084.500 689v12" stroke="#adadad"/>
<circle cx="1168" cy="695" r="5" fill="none" stroke="#777"/><path d="M1165.500 695h5M1168 692.500v5" stroke="#666"/>
<path d="M1187 690v1M1187 694v1M1187 698v1" stroke="#999"/>
<rect x="1199" y="691" width="65" height="8" fill="#dadada"/>
<rect x="1199" y="691" width="8" height="8" fill="#f4f4f4" stroke="#c4c4c4" stroke-width=".5"/><path d="M1204.500 693l-2.500 2 2.500 2z" fill="#555"/>
<rect x="1209" y="691" width="15" height="8" fill="#fff"/>
<rect x="1260" y="691" width="9" height="8" fill="#f4f4f4" stroke="#c4c4c4" stroke-width=".5"/><path d="M1263.500 693l2.500 2-2.500 2z" fill="#555"/>

<!-- status bar -->
<rect y="705" width="1280" height="15" fill="#f3f2f1"/>
<text class="st" x="5" y="714.500" textLength="25">Готово</text>
<text class="st" x="888" y="714.500" textLength="76">Среднее: 3.442857143</text>
<text class="st" x="975" y="714.500" textLength="49">Количество: 9</text>
<text class="st" x="1035" y="714.500" textLength="40">Сумма: 24.1</text>
<rect x="1088" y="705" width="25" height="15" fill="#d4d2d0"/>
<path d="M1096.500 708.500h8v7h-8zM1096.500 711h8M1096.500 713h8M1099 708.500v7M1102 708.500v7" fill="none" stroke="#666" stroke-width=".7"/>
<path d="M1122.500 708.500h9v7h-9z" fill="none" stroke="#777" stroke-width=".7"/><rect x="1125" y="710" width="4" height="4" fill="none" stroke="#999" stroke-width=".6"/>
<path d="M1146.500 708.500h9v7h-9zM1149.500 708.500v3.500h3v-3.500" fill="none" stroke="#777" stroke-width=".7"/>
<path d="M1167 712.500h3M1174 712.500h68M1242.500 712.500h4M1244.500 710.500v4" stroke="#777" stroke-width=".8"/>
<rect x="1207" y="709" width="3" height="7" fill="#666"/>
<text class="st" x="1255" y="714.500" textLength="19">115 %</text>

<!-- V logo watermark -->
<path d="M1168 22h57l-28 48z" fill="#c85a55" opacity=".72"/>
<path d="M1180 24l17 32 14-32" fill="none" stroke="#fff" stroke-width="6.500" opacity=".95"/>
<circle cx="1199" cy="55" r="10" fill="none" stroke="#555" stroke-width=".8"/>
<path d="M1191 62l-6 6" stroke="#555"/>
<text x="1132.500" y="101" font-size="28" font-weight="700" fill="#4f4f4f" opacity=".82" stroke="#4f4f4f" stroke-width=".5" textLength="128" lengthAdjust="spacingAndGlyphs">VYSOTSKIY</text>
<text x="1136" y="116" font-size="6.500" fill="#555" textLength="120">CONSULTING</text>

<!-- text watermarks -->
<text x="1102" y="611" font-size="19" fill="#4a4a4a" opacity=".75" textLength="148">Сергей Макаров</text>
<text x="603" y="634" font-size="19" fill="#4a4a4a" opacity=".75" textLength="649">Видеокурс: "BIM-менеджер: администрирование и совместная работа"</text>
<text x="1034" y="658" font-size="19" fill="#666" opacity=".5" textLength="218">Блок: "Создание системы"</text>
<text x="1047" y="681" font-size="19" fill="#666" opacity=".38" textLength="205">Урок: "Библиотеки. LOD I"</text>
<text x="23" y="657" font-size="17" fill="#777" opacity=".55" textLength="155">Vysotskiy Consulting</text>
<text x="26" y="681" font-size="17" fill="#555" opacity=".75" textLength="92">www.bim.vc</text>
</svg>
</body></html>
